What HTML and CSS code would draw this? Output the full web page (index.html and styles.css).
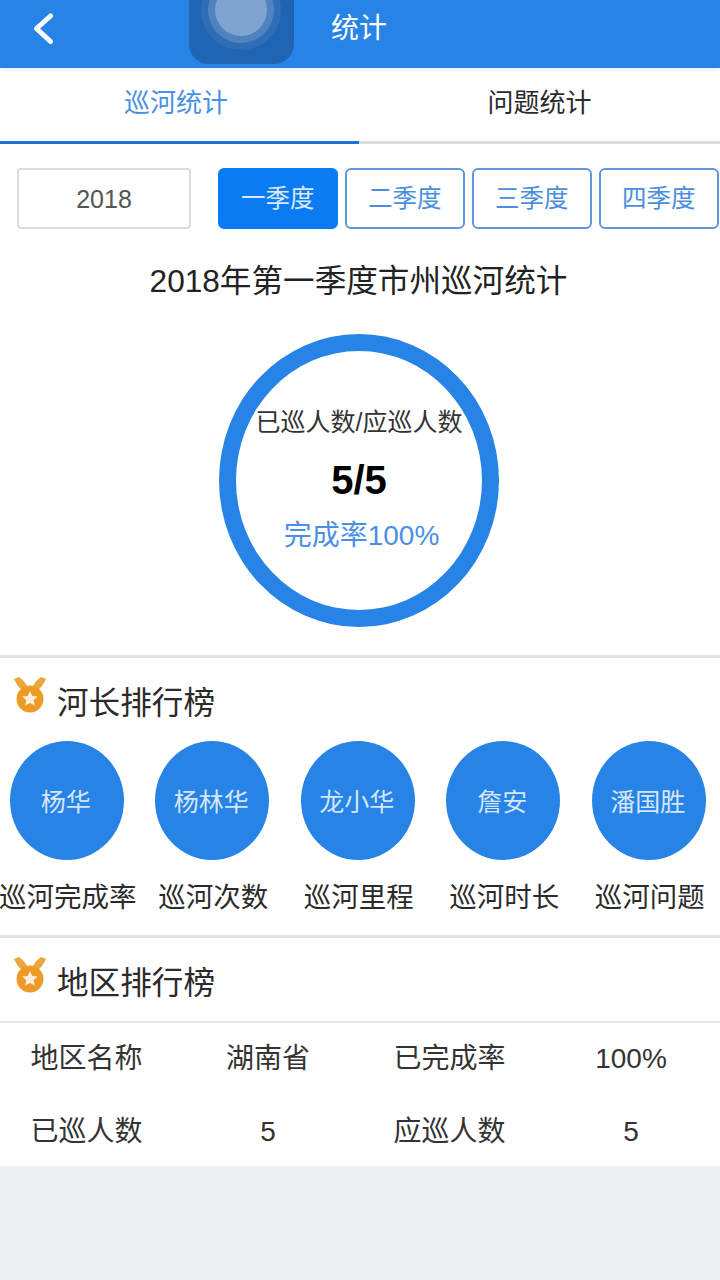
FILE: index.html
```html
<!DOCTYPE html>
<html lang="zh-CN">
<head>
    <meta charset="UTF-8">
    <meta name="viewport" content="width=device-width, initial-scale=1.0">
    <title>统计</title>
    <link rel="stylesheet" href="styles.css">
</head>
<body>
    <!-- 顶部导航 -->
    <div class="topbar">
        <svg class="back" width="24" height="34" viewBox="0 0 24 34"><path d="M20.5 4 L6.5 16.5 L20.5 29.5" fill="none" stroke="#fff" stroke-width="5" stroke-linecap="round" stroke-linejoin="round"/></svg>
        <div class="app-icon"><div class="ring-outer"><div class="ring-mid"><div class="ring-inner"></div></div></div></div>
        <div class="title">统计</div>
    </div>

    <!-- 标签 -->
    <div class="tabs">
        <div class="tab active">巡河统计</div>
        <div class="tab">问题统计</div>
    </div>

    <!-- 筛选 -->
    <div class="filter">
        <div class="year">2018</div>
        <div class="quarters">
            <div class="quarter on">一季度</div>
            <div class="quarter">二季度</div>
            <div class="quarter">三季度</div>
            <div class="quarter">四季度</div>
        </div>
    </div>

    <h2 class="heading">2018年第一季度市州巡河统计</h2>

    <div class="circle-wrap">
        <div class="circle">
            <div class="circle-label">已巡人数/应巡人数</div>
            <div class="circle-num">5/5</div>
            <div class="circle-rate">完成率100%</div>
        </div>
    </div>

    <!-- 河长排行榜 -->
    <div class="section">
        <div class="section-head">
            <svg class="medal" width="34" height="38" viewBox="0 0 34 38"><path d="M1 3 L6 1 Q12 5 15 12 L10 15 Q4 10 1 3 Z M33 3 L28 1 Q22 5 19 12 L24 15 Q30 10 33 3 Z" fill="#eda63a"/><circle cx="17" cy="23" r="13.5" fill="#ee9a26"/><path d="M17 15 L19.3 20 L24.6 20.6 L20.7 24.2 L21.8 29.6 L17 26.9 L12.2 29.6 L13.3 24.2 L9.4 20.6 L14.7 20 Z" fill="#fdf0dc"/></svg>
            <span>河长排行榜</span>
        </div>
        <div class="ranks">
            <div class="rank"><div class="avatar">杨华</div><div class="rank-name">巡河完成率</div></div>
            <div class="rank"><div class="avatar">杨林华</div><div class="rank-name">巡河次数</div></div>
            <div class="rank"><div class="avatar">龙小华</div><div class="rank-name">巡河里程</div></div>
            <div class="rank"><div class="avatar">詹安</div><div class="rank-name">巡河时长</div></div>
            <div class="rank"><div class="avatar">潘国胜</div><div class="rank-name">巡河问题</div></div>
        </div>
    </div>

    <!-- 地区排行榜 -->
    <div class="section area">
        <div class="section-head">
            <svg class="medal" width="34" height="38" viewBox="0 0 34 38"><path d="M1 3 L6 1 Q12 5 15 12 L10 15 Q4 10 1 3 Z M33 3 L28 1 Q22 5 19 12 L24 15 Q30 10 33 3 Z" fill="#eda63a"/><circle cx="17" cy="23" r="13.5" fill="#ee9a26"/><path d="M17 15 L19.3 20 L24.6 20.6 L20.7 24.2 L21.8 29.6 L17 26.9 L12.2 29.6 L13.3 24.2 L9.4 20.6 L14.7 20 Z" fill="#fdf0dc"/></svg>
            <span>地区排行榜</span>
        </div>
        <div class="table">
            <div>地区名称</div><div>湖南省</div><div>已完成率</div><div>100%</div>
            <div>已巡人数</div><div>5</div><div>应巡人数</div><div>5</div>
        </div>
    </div>
    <div class="footer"></div>
</body>
</html>
```
FILE: styles.css
```css
* {
    box-sizing: border-box;
}
html, body {
    height: 100%;
}
body {
    margin: 0;
    display: flex;
    flex-direction: column;
    background: #fff;
    color: #2b2b2b;
    font-family: "Liberation Sans", "Noto Sans CJK SC", sans-serif;
    overflow: hidden;
}
.topbar {
    height: 68px;
    flex: none;
    background: #2784e6;
    display: flex;
    justify-content: center;
    position: relative;
    box-shadow: 0 2px 3px rgba(0,0,0,0.08);
}
.back {
    position: absolute;
    left: 30px;
    top: 12px;
}
.app-icon {
    position: absolute;
    left: 189px;
    top: 0;
    width: 105px;
    height: 64px;
    background: #1f65b4;
    border-radius: 0 0 20px 20px;
    overflow: hidden;
}
.ring-outer, .ring-mid, .ring-inner {
    border-radius: 50%;
    display: flex;
    align-items: center;
    justify-content: center;
}
.ring-outer {
    position: absolute;
    left: 12px;
    top: -30px;
    width: 80px;
    height: 80px;
    background: #2f6eb7;
}
.ring-mid {
    width: 66px;
    height: 66px;
    background: #4f83c0;
}
.ring-inner {
    width: 52px;
    height: 52px;
    background: #7fa4d0;
}
.title {
    color: #fff;
    font-size: 28px;
    line-height: 58px;
    margin-left: -2px;
}
.tabs {
    display: flex;
    height: 76px;
    flex: none;
    border-bottom: 3px solid #dcdcdc;
}
.tab {
    flex: 1;
    text-align: center;
    font-size: 26px;
    line-height: 70px;
    margin-bottom: -3px;
    border-bottom: 3px solid transparent;
}
.tab.active {
    flex: 0 0 359px;
    color: #4a90e2;
    border-bottom-color: #1a73d8;
    padding-right: 7px;
}
.filter {
    display: flex;
    padding: 24px 0 0 17px;
    flex: none;
}
.year {
    width: 174px;
    height: 61px;
    border: 2px solid #dddddd;
    border-radius: 4px;
    text-align: center;
    line-height: 58px;
    font-size: 25px;
    color: #555;
}
.quarters {
    display: flex;
    gap: 7.5px;
    margin-left: 27px;
}
.quarter {
    width: 119.5px;
    height: 61px;
    border: 2px solid #5d97dc;
    border-radius: 6px;
    text-align: center;
    line-height: 58px;
    font-size: 24.5px;
    color: #4a8edd;
}
.quarter.on {
    background: #0a7bf2;
    border-color: #0a7bf2;
    color: #dce9fa;
}
.heading {
    margin: 30px 0 0;
    padding-right: 3px;
    font-weight: normal;
    font-size: 31.6px;
    line-height: 44px;
    text-align: center;
    color: #222;
}
.circle-wrap {
    display: flex;
    justify-content: center;
    padding: 31px 2px 0 0;
    flex: none;
}
.circle {
    width: 280px;
    height: 293px;
    border: 17px solid #2784e6;
    border-radius: 50%;
    display: flex;
    flex-direction: column;
    align-items: center;
    padding-top: 53px;
    white-space: nowrap;
}
.circle-label {
    font-size: 25px;
    line-height: 36px;
    color: #333;
}
.circle-num {
    font-size: 40px;
    font-weight: bold;
    line-height: 44px;
    margin-top: 18px;
    color: #000;
}
.circle-rate {
    font-size: 28px;
    line-height: 40px;
    margin: 14px 0 0 5px;
    color: #4a90e2;
}
.section {
    margin-top: 28px;
    border-top: 3px solid #e2e2e2;
    flex: none;
}
.section-head {
    display: flex;
    align-items: flex-start;
    height: 83px;
    padding: 18px 0 0 13px;
    font-size: 31.6px;
    color: #2b2b2b;
}
.section-head span {
    margin-left: 10px;
    line-height: 50px;
    margin-top: 2px;
}
.ranks {
    display: flex;
    margin-left: -6px;
}
.rank {
    width: 145.5px;
    flex: none;
    display: flex;
    flex-direction: column;
    align-items: center;
    white-space: nowrap;
}
.avatar {
    width: 114px;
    height: 119px;
    padding: 0 2px 2px 0;
    border-radius: 50%;
    background: #2784e6;
    color: #d6e6f9;
    font-size: 25px;
    display: flex;
    align-items: center;
    justify-content: center;
}
.rank-name {
    font-size: 27.5px;
    line-height: 40px;
    margin: 18px 0 0 2px;
}
.area {
    margin-top: 17px;
}
.table {
    display: grid;
    grid-template-columns: 173px 190px 173px 190px;
    border-top: 2px solid #e8e8e8;
    font-size: 28px;
    text-align: center;
    height: 145px;
    grid-auto-rows: 73px;
    line-height: 72px;
    color: #333;
}
.footer {
    flex: 1;
    background: #eff0f4;
}
```
